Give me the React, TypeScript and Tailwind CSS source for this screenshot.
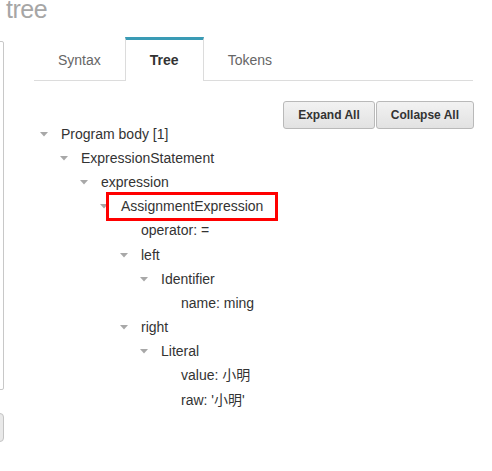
import React from 'react';

// One row of the AST tree view
interface TreeRow {
  label: string;
  level: number;
  open?: boolean; // has a disclosure triangle
}

const rows: TreeRow[] = [
  { label: 'Program body [1]', level: 0, open: true },
  { label: 'ExpressionStatement', level: 1, open: true },
  { label: 'expression', level: 2, open: true },
  { label: 'AssignmentExpression', level: 3, open: true },
  { label: 'operator: =', level: 4 },
  { label: 'left', level: 4, open: true },
  { label: 'Identifier', level: 5, open: true },
  { label: 'name: ming', level: 6 },
  { label: 'right', level: 4, open: true },
  { label: 'Literal', level: 5, open: true },
  { label: 'value: 小明', level: 6 },
  { label: "raw: '小明'", level: 6 },
];

// per-level indentation, written out so tailwind picks them up
const indent = ['pl-0', 'pl-[20px]', 'pl-[40px]', 'pl-[60px]', 'pl-[80px]', 'pl-[100px]', 'pl-[120px]'];

const Triangle = () => (
  <svg width="8" height="5" viewBox="0 0 8 5" className="block">
    <polygon points="0,0 8,0 4,4.5" fill="#a8a8a8" />
  </svg>
);

const App = () => {
  return (
    <div
      className="relative w-[492px] h-[471px] overflow-hidden bg-white text-[#333]"
      style={{ fontFamily: '"Liberation Sans", "Noto Sans CJK SC", Arial, sans-serif' }}
    >
      {/* page heading, cut off at the top */}
      <div className="h-[37px] pl-[6px] flex items-start">
        <h1 className="text-[25px] leading-[25px] mt-[-3px] text-[#a6a6a6] font-normal tracking-[-0.5px]">tree</h1>
      </div>

      <div className="flex">
        {/* left panel, mostly scrolled out of view */}
        <div className="w-[204px] ml-[-200px] flex flex-col shrink-0">
          <div className="mt-[4px] h-[349px] border border-[#c8c8c8] rounded-[2px]" />
          <div className="mt-[23px] h-[29px] border border-[#c4c4c4] bg-[#e9e9e9] rounded-[4px]" />
        </div>

        {/* main panel */}
        <div className="ml-[30px] w-[440px] flex flex-col">
          {/* tabs */}
          <div className="flex border-b border-[#dcdcdc] w-[439px]">
            <div className="h-[43px] px-6 pt-[3px] flex items-center text-[14px] text-[#666]">Syntax</div>
            <div className="h-[44px] mb-[-1px] px-6 flex items-center text-[14px] font-bold text-[#333] bg-white border-t-[3px] border-t-[#3a9bb5] border-x border-x-[#dcdcdc]">
              Tree
            </div>
            <div className="h-[43px] px-6 pt-[3px] flex items-center text-[14px] text-[#666]">Tokens</div>
          </div>

          {/* expand / collapse buttons */}
          <div className="mt-[20px] h-[21px] flex justify-end items-start gap-[1px]">
            <button className="h-[28px] px-[14px] text-[12px] font-bold text-[#333] rounded-[3px] border border-[#b9b9b9] bg-gradient-to-b from-[#f2f2f2] to-[#e2e2e2] shrink-0">
              Expand All
            </button>
            <button className="h-[28px] px-[14px] text-[12px] font-bold text-[#333] rounded-[3px] border border-[#b9b9b9] bg-gradient-to-b from-[#f2f2f2] to-[#e2e2e2] shrink-0">
              Collapse All
            </button>
          </div>

          {/* tree */}
          <ul className="pl-[6px]">
            {rows.map((row, i) => (
              <li key={i} className={`h-[24.2px] flex items-center text-[14px] ${indent[row.level]}`}>
                <span className="w-[21px] shrink-0 flex items-center">{row.open && <Triangle />}</span>
                <span className="whitespace-nowrap">{row.label}</span>
              </li>
            ))}
          </ul>
        </div>
      </div>

      {/* annotation box around AssignmentExpression */}
      <div className="absolute left-[106px] top-[192px] w-[172px] h-[29px] border-[3px] border-[#ff0000]" />
    </div>
  );
};

export default App;
